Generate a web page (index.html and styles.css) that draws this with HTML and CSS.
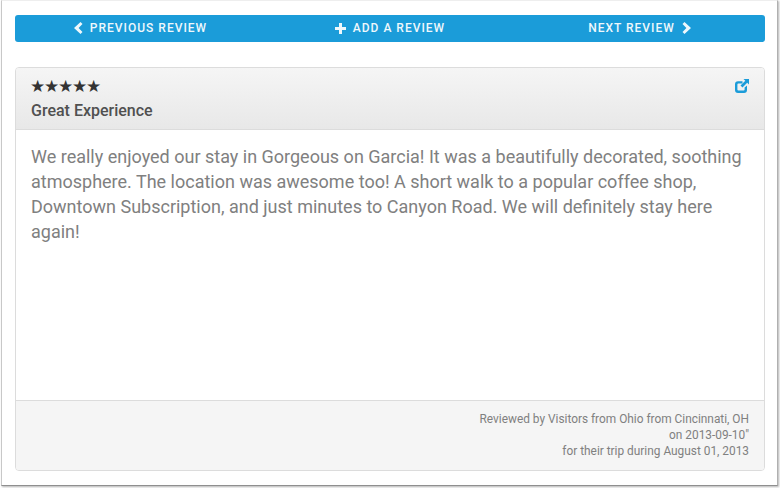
FILE: index.html
```html
<!DOCTYPE html>
<html lang="en">
<head>
<meta charset="utf-8">
<title>Review</title>
<link rel="stylesheet" href="styles.css">
</head>
<body>
<div class="window">
  <nav class="nav">
    <a class="nav-item"><svg class="icon" width="10" height="12" viewBox="0 0 10 12"><path d="M9.500 2.100 5.600 6l3.900 3.900L7.500 12 1 6 7.500 0z"/></svg>PREVIOUS REVIEW</a>
    <a class="nav-item"><svg class="icon" width="11" height="11" viewBox="0 0 11 11"><path d="M4 0h3v4h4v3H7v4H4V7H0V4h4z"/></svg>ADD A REVIEW</a>
    <a class="nav-item">NEXT REVIEW<svg class="icon" width="10" height="12" viewBox="0 0 10 12"><path d="M.5 2.100 4.400 6 .5 9.900 2.500 12 9 6 2.500 0z"/></svg></a>
  </nav>
  <section class="card">
    <header class="card-head">
      <div class="head-text">
        <div class="stars">★★★★★</div>
        <h2 class="title">Great Experience</h2>
      </div>
      <svg class="share" width="14" height="14" viewBox="0 0 14 14"><path d="M3 2.200h4.500v2.300H3.400a1 1 0 0 0-1 1v5.100a1 1 0 0 0 1 1h5.200a1 1 0 0 0 1-1V8.500l2.400-2v4.500a3 3 0 0 1-3 3H3a3 3 0 0 1-3-3V5.200a3 3 0 0 1 3-3z"/><path d="M8.500 0H14v5.500l-1.800-1.800-4.700 4.800L5.500 6.500l4.800-4.700z"/></svg>
    </header>
    <div class="card-body">We really enjoyed our stay in Gorgeous on Garcia! It was a beautifully decorated, soothing atmosphere. The location was awesome too! A short walk to a popular coffee shop, Downtown Subscription, and just minutes to Canyon Road. We will definitely stay here again!</div>
    <footer class="card-foot">Reviewed by Visitors from Ohio from Cincinnati, OH<br>on 2013-09-10"<br>for their trip during August 01, 2013</footer>
  </section>
</div>
</body>
</html>
```
FILE: styles.css
```css
* { box-sizing: border-box; }
html, body { margin: 0; height: 100%; background: #fff; }
body { padding: 0 2px 2px 1px; font-family: Roboto, sans-serif; overflow: hidden; }
.window {
  height: 486px;
  padding: 14px 12px 14px 13px;
  background: #fff;
  border-left: 1px solid #c8c8c8;
  border-right: 1px solid #b0b0b0;
  border-bottom: 1px solid #8f8f8f;
  border-top: 1px solid #eee;
  box-shadow: 1px 1px 2px rgba(0, 0, 0, .3);
  display: flex;
  flex-direction: column;
}
.nav {
  height: 27px;
  flex: none;
  display: grid;
  grid-template-columns: repeat(3, 1fr);
  background: #1b9cd9;
  border-radius: 3px;
  margin-bottom: 25px;
}
.nav-item {
  display: flex;
  align-items: center;
  justify-content: center;
  gap: 7px;
  padding-bottom: 1px;
  color: #fff;
  font-size: 12px;
  font-weight: 500;
  letter-spacing: 1px;
  opacity: .93;
}
.icon { fill: #fff; flex: none; }
.card {
  flex: 1;
  display: flex;
  flex-direction: column;
  border: 1px solid #dcdcdc;
  border-radius: 4px;
  overflow: hidden;
}
.card-head {
  height: 62px;
  flex: none;
  display: flex;
  justify-content: space-between;
  padding: 8px 15px 0;
  background: linear-gradient(#f5f5f5, #e8e8e8);
  border-bottom: 1px solid #dcdcdc;
}
.stars {
  margin-left: -1px;
  font-family: "DejaVu Sans", sans-serif;
  font-size: 17px;
  letter-spacing: -1.27px;
  line-height: 20px;
  color: #333;
}
.title {
  margin: 5px 0 0;
  font-size: 16px;
  line-height: 20px;
  font-weight: 500;
  color: #505050;
}
.share { fill: #1b9cd9; margin-top: 3px; }
.card-body {
  flex: 1;
  padding: 15.3px 15px 0;
  font-size: 18px;
  line-height: 24.75px;
  color: #808080;
}
.card-foot {
  height: 70px;
  flex: none;
  padding: 10px 15px 0;
  background: #f5f5f5;
  border-top: 1px solid #dcdcdc;
  font-size: 11.87px;
  line-height: 16px;
  text-align: right;
  color: #808080;
}
```
